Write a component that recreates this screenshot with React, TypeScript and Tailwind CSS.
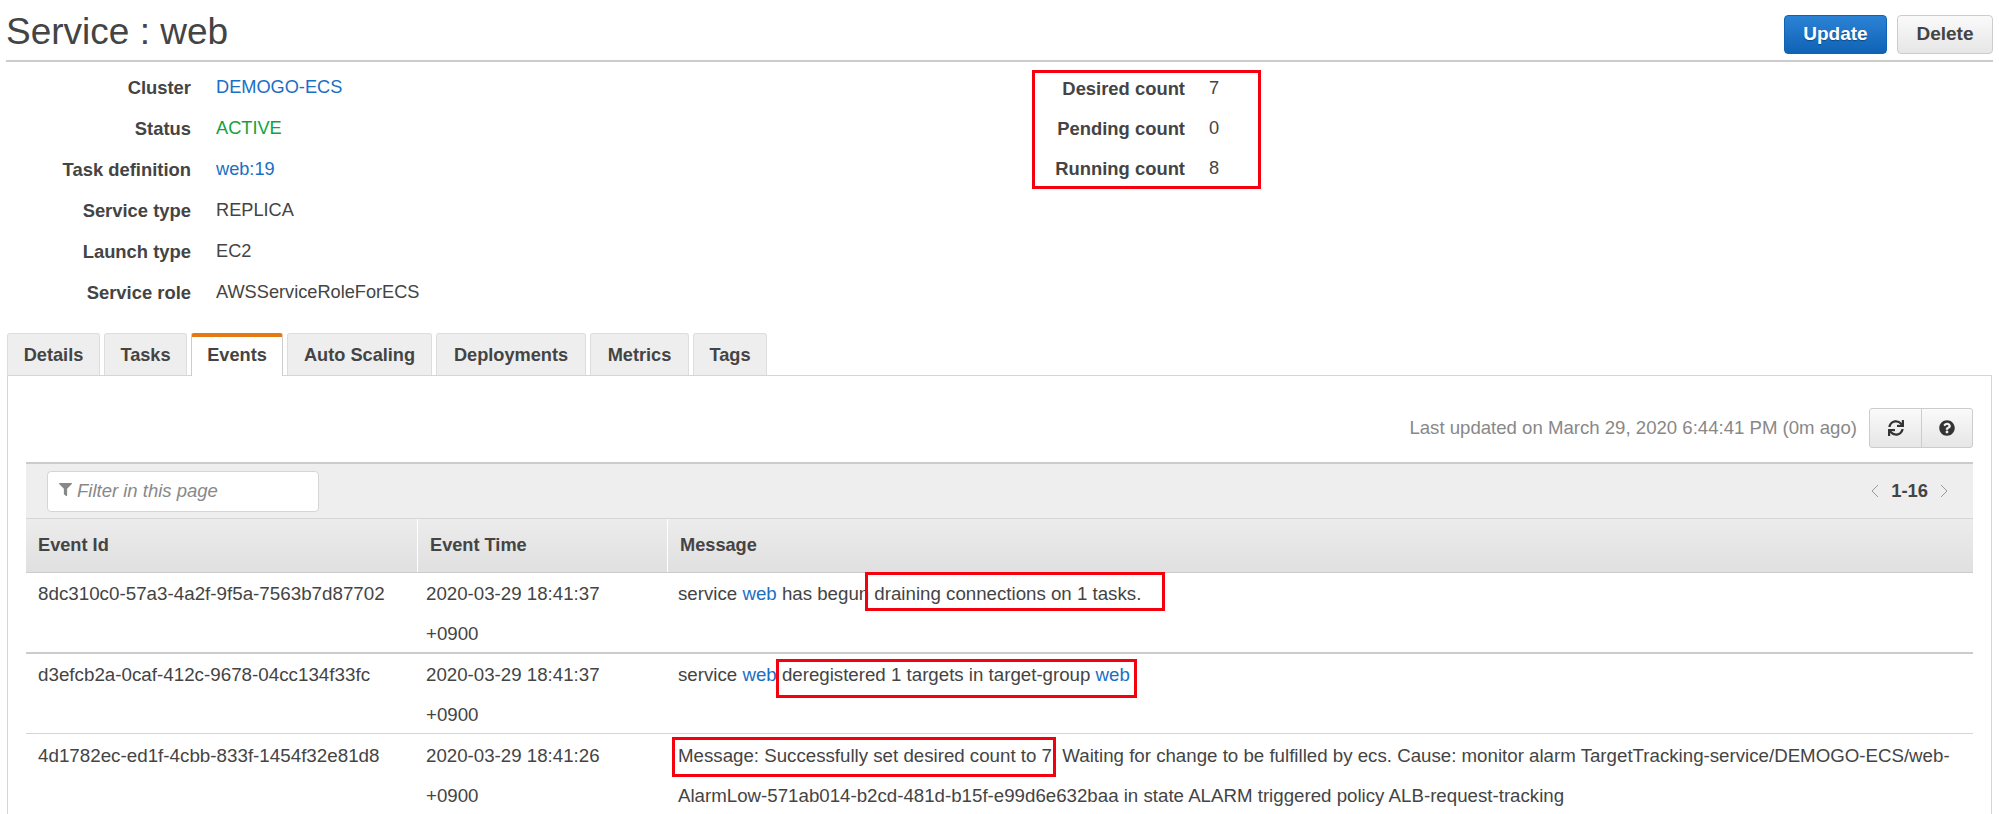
import React from "react";
import { FaSync, FaQuestionCircle, FaFilter } from "react-icons/fa";

const Link = ({ children }: { children: React.ReactNode }) => (
  <span className="text-[#1a6fc4]">{children}</span>
);

const details: [string, React.ReactNode][] = [
  ["Cluster", <Link>DEMOGO-ECS</Link>],
  ["Status", <span className="text-[#10a33c]">ACTIVE</span>],
  ["Task definition", <Link>web:19</Link>],
  ["Service type", "REPLICA"],
  ["Launch type", "EC2"],
  ["Service role", "AWSServiceRoleForECS"],
];

const counts: [string, string][] = [
  ["Desired count", "7"],
  ["Pending count", "0"],
  ["Running count", "8"],
];

const tabs: [string, string][] = [
  ["Details", "w-[93px]"],
  ["Tasks", "w-[83px]"],
  ["Events", "w-[92px]"],
  ["Auto Scaling", "w-[145px]"],
  ["Deployments", "w-[150px]"],
  ["Metrics", "w-[99px]"],
  ["Tags", "w-[74px]"],
];

const RedBox = ({ className }: { className: string }) => (
  <div className={"absolute border-[3px] border-[#f5000f] pointer-events-none " + className} />
);

const Row = ({
  id,
  time,
  border,
  idClass = "",
  children,
}: {
  id: string;
  time: string;
  border: string;
  idClass?: string;
  children: React.ReactNode;
}) => (
  <div className={"grid grid-cols-[391px_250px_1fr] text-[18.7px] leading-[40px] " + border}>
    <div className={"pl-3 text-[18.8px] " + idClass}>{id}</div>
    <div className="pl-[9px]">
      {time}
      <br />
      +0900
    </div>
    <div className="relative pl-[11px]">{children}</div>
  </div>
);

export default function App() {
  return (
    <div className="relative h-[814px] w-[1999px] overflow-hidden bg-white text-[18.2px] text-[#444] font-['Liberation_Sans',Arial,sans-serif]">
      <header className="mx-[6px] flex h-[62px] items-start justify-between border-b-2 border-[#ccc]">
        <h1 className="mt-[10px] text-[37px] leading-[44px] text-[#444]">Service : web</h1>
        <div className="mt-[15px] flex gap-[10px] text-[19px] font-bold">
          <button className="h-[39px] w-[103px] rounded-[4px] border border-[#0f62b4] bg-gradient-to-b from-[#2b83d6] to-[#0f62b4] text-white [text-shadow:0_1px_1px_#0a4a8a]">
            Update
          </button>
          <button className="h-[39px] w-[96px] rounded-[4px] border border-[#ccc] bg-gradient-to-b from-[#fafafa] to-[#e6e6e6] text-[#444]">
            Delete
          </button>
        </div>
      </header>

      <section className="flex h-[271px] items-start pt-[5px]">
        <div className="w-[1032px]">
          {details.map(([label, value]) => (
            <div key={label} className="grid grid-cols-[191px_1fr] gap-x-[25px] leading-[41px]">
              <div className="text-right text-[18.4px] font-bold">{label}</div>
              <div>{value}</div>
            </div>
          ))}
        </div>
        <div className="mt-[3px] h-[119px] w-[229px] border-[3px] border-[#f5000f]">
          {counts.map(([label, value]) => (
            <div key={label} className="-mt-[1px] grid grid-cols-[150px_1fr] gap-x-[24px] leading-[41px] first:-mt-[5px]">
              <div className="text-right text-[18.4px] font-bold">{label}</div>
              <div>{value}</div>
            </div>
          ))}
        </div>
      </section>

      <nav className="relative z-10 ml-[7px] flex h-[42px] gap-1 font-bold">
        {tabs.map(([t, w]) =>
          t === "Events" ? (
            <div
              key={t}
              className={w + " h-[43px] rounded-t-[3px] border-x border-t-4 border-x-[#ccc] border-t-[#e47911] bg-white pt-[6px] text-center leading-[24px]"}
            >
              {t}
            </div>
          ) : (
            <div
              key={t}
              className={w + " h-[42px] rounded-t-[3px] border border-b-0 border-[#ddd] bg-[#eee] pt-[9px] text-center leading-[24px]"}
            >
              {t}
            </div>
          )
        )}
      </nav>

      <main className="ml-[7px] mr-[7px] h-[439px] border border-b-0 border-[#d5d5d5] px-[18px] pt-[32px]">
        <div className="flex h-[40px] items-center justify-end">
          <span className="mr-[12px] text-[18.6px] text-[#888]">Last updated on March 29, 2020 6:44:41 PM (0m ago)</span>
          <div className="flex h-[40px] w-[104px] rounded-[3px] border border-[#ccc] bg-gradient-to-b from-[#fafafa] to-[#e6e6e6] text-[#333]">
            <div className="flex w-[52px] items-center justify-center border-r border-[#ccc]">
              <FaSync size={16} />
            </div>
            <div className="flex flex-1 items-center justify-center">
              <FaQuestionCircle size={16} />
            </div>
          </div>
        </div>

        <div className="mt-[14px] flex h-[56px] items-center justify-between border-t-2 border-[#ccc] bg-[#eee] pl-[21px] pr-[22px]">
          <div className="flex h-[41px] w-[272px] items-center rounded-[4px] border border-[#d5d5d5] bg-white pl-[11px] text-[18.5px] italic text-[#888]">
            <FaFilter size={13} className="mr-[5px] -mt-1 text-[#888]" />
            Filter in this page
          </div>
          <div className="flex items-center gap-[12px] pr-[3px]">
            <svg width="8" height="16" viewBox="0 0 8 16" fill="none" stroke="#999" strokeWidth="1">
              <path d="M7 2 1 8l6 6" />
            </svg>
            <span className="text-[18.4px] font-bold">1-16</span>
            <svg width="8" height="16" viewBox="0 0 8 16" fill="none" stroke="#999" strokeWidth="1">
              <path d="m1 2 6 6-6 6" />
            </svg>
          </div>
        </div>

        <div className="grid h-[55px] grid-cols-[391px_250px_1fr] border-y border-y-[#d5d5d5] border-b-[#ccc] bg-gradient-to-b from-[#ececec] to-[#e0e0e0] font-bold leading-[53px]">
          <div className="pl-3">Event Id</div>
          <div className="border-l border-white pl-3">Event Time</div>
          <div className="border-l border-white pl-3">Message</div>
        </div>

        <Row id="8dc310c0-57a3-4a2f-9f5a-7563b7d87702" time="2020-03-29 18:41:37" border="h-[81px] border-b-2 border-[#ccc] pt-[1px]">
          service <Link>web</Link> has begun draining connections on 1 tasks.
          <RedBox className="left-[198px] top-[-2px] h-[39px] w-[300px]" />
        </Row>
        <Row id="d3efcb2a-0caf-412c-9678-04cc134f33fc" time="2020-03-29 18:41:37" border="h-[80px] border-b border-[#d5d5d5] pt-[1px]">
          service <Link>web</Link> deregistered 1 targets in target-group <Link>web</Link>
          <RedBox className="left-[109px] top-[4px] h-[39px] w-[361px]" />
        </Row>
        <Row id="4d1782ec-ed1f-4cbb-833f-1454f32e81d8" time="2020-03-29 18:41:26" border="pt-[2px]" idClass="h-[79px] border-b border-[#ccc]">
          Message: Successfully set desired count to 7. Waiting for change to be fulfilled by ecs. Cause: monitor alarm TargetTracking-service/DEMOGO-ECS/web-
          <br />
          AlarmLow-571ab014-b2cd-481d-b15f-e99d6e632baa in state ALARM triggered policy ALB-request-tracking
          <RedBox className="left-[5px] top-[1px] h-[40px] w-[384px]" />
        </Row>
      </main>
    </div>
  );
}
